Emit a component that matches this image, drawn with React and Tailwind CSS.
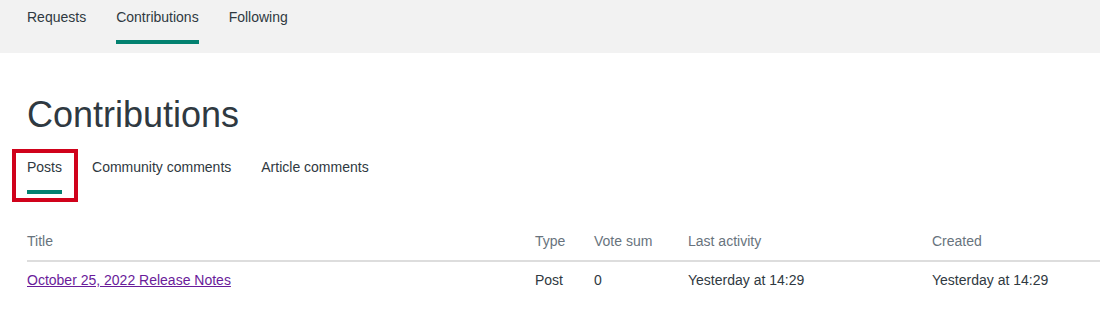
import React from "react";

const font = { fontFamily: '"Liberation Sans", Arial, sans-serif' };

function NavItem({ label, active }) {
  return (
    <div className="flex flex-col pt-[7px]">
      <span className="text-[14px] leading-5 text-[#2f3941]">{label}</span>
      <div className={"mt-[13px] h-[4px] " + (active ? "bg-[#038170]" : "bg-transparent")} />
    </div>
  );
}

function SubTab({ label, active, boxed }) {
  return (
    <div className="relative flex flex-col">
      <span className="text-[14px] leading-5 text-[#2f3941]">{label}</span>
      <div className={"mt-[13px] h-[4px] " + (active ? "bg-[#038170]" : "bg-transparent")} />
      {boxed && (
        <div className="absolute -left-[15px] -right-[16px] -top-[8px] -bottom-[8px] border-[4px] border-[#d0021b]" />
      )}
    </div>
  );
}

export default function App() {
  const cols = "grid grid-cols-[508px_59px_94px_244px_1fr]";
  return (
    <div className="w-[1100px] h-[310px] bg-white overflow-hidden" style={font}>
      <div className="h-[53px] bg-[#f2f2f2] pl-[27px] flex gap-[30px]">
        <NavItem label="Requests" />
        <NavItem label="Contributions" active />
        <NavItem label="Following" />
      </div>
      <div className="pl-[27px]">
        <h1 className="mt-[40px] text-[36px] leading-[44px] font-normal text-[#2f3941]">Contributions</h1>
        <div className="mt-[20px] flex gap-[30px]">
          <SubTab label="Posts" active boxed />
          <SubTab label="Community comments" />
          <SubTab label="Article comments" />
        </div>
        <div className="mt-[27px] w-[1200px]">
          <div className={cols + " text-[14px] leading-5 text-[#68737d] pt-[10px] pb-[9px] border-b-2 border-[#dddddd]"}>
            <div>Title</div>
            <div>Type</div>
            <div>Vote sum</div>
            <div>Last activity</div>
            <div>Created</div>
          </div>
          <div className={cols + " text-[14px] leading-5 text-[#2f3941] pt-[8px]"}>
            <div>
              <a href="#" className="text-[#6a1b9a] underline">October 25, 2022 Release Notes</a>
            </div>
            <div>Post</div>
            <div>0</div>
            <div>Yesterday at 14:29</div>
            <div>Yesterday at 14:29</div>
          </div>
        </div>
      </div>
    </div>
  );
}
